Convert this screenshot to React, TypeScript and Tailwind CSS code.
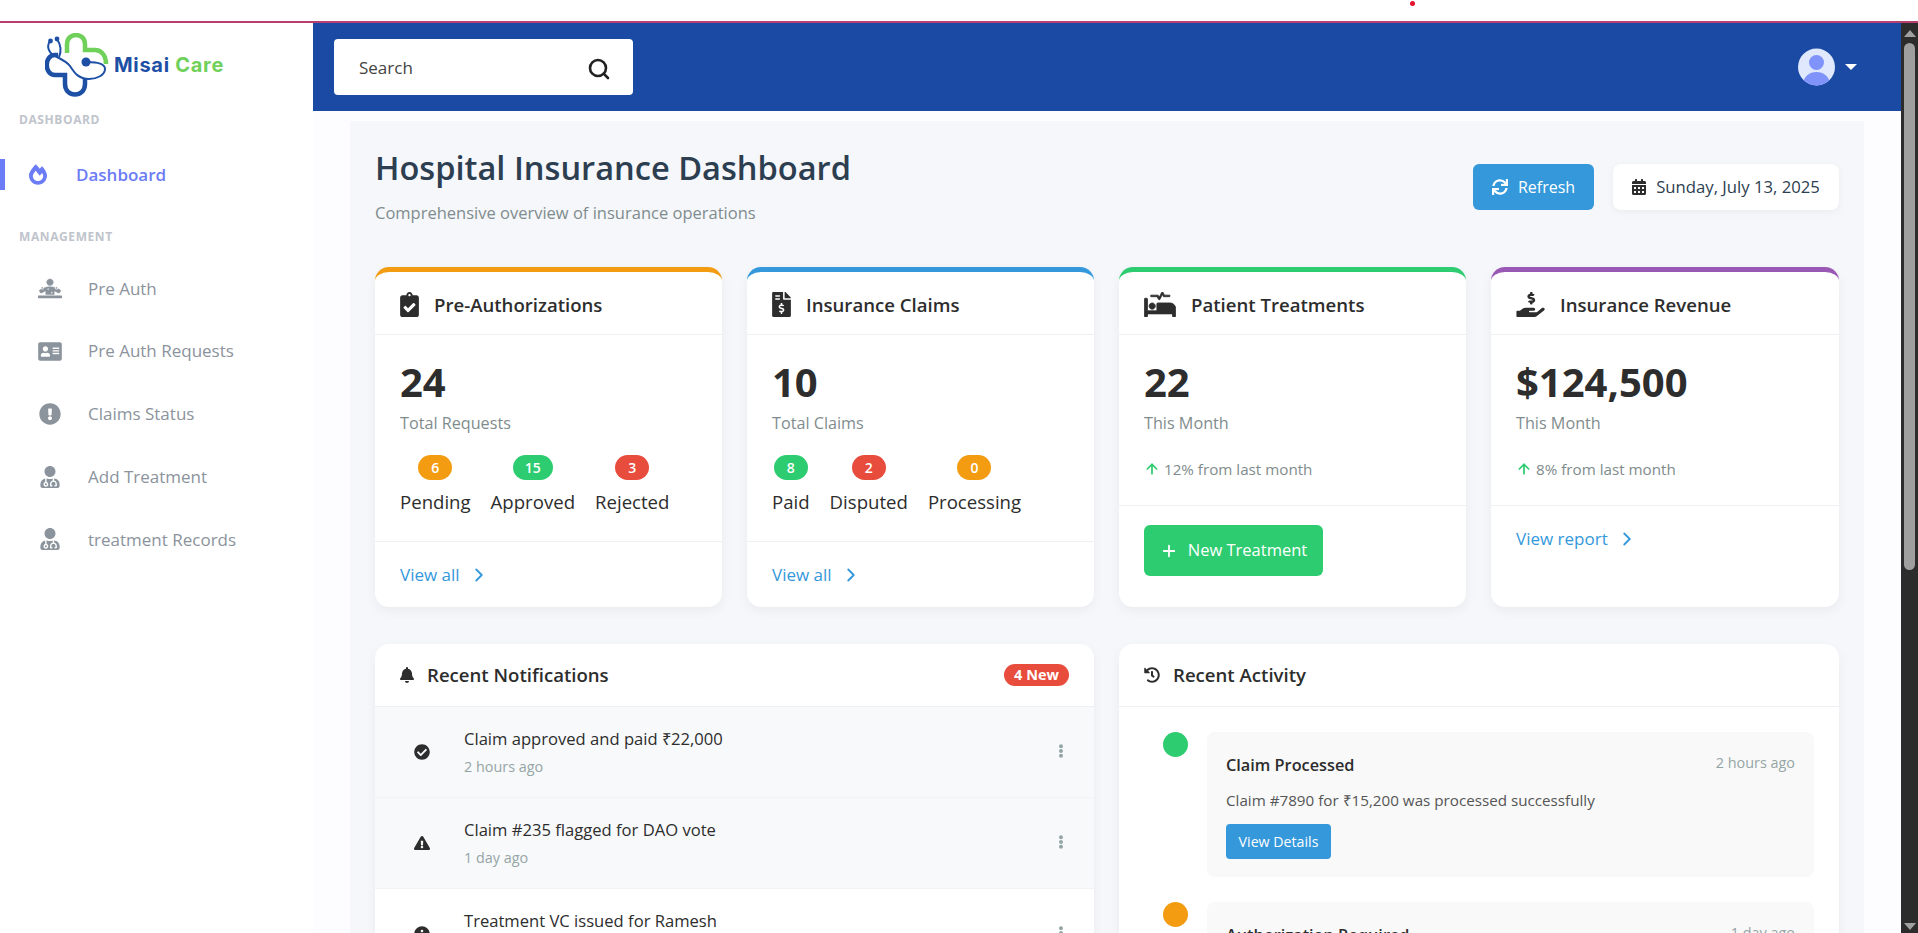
import React from 'react';
import {
  FaAddressCard,
  FaBell,
  FaCalendarAlt,
  FaCheckCircle,
  FaClipboardCheck,
  FaDiagnoses,
  FaEllipsisV,
  FaExclamationCircle,
  FaExclamationTriangle,
  FaFileInvoiceDollar,
  FaFireAlt,
  FaHandHoldingUsd,
  FaHistory,
  FaInfoCircle,
  FaProcedures,
  FaSync,
  FaUserMd,
} from 'react-icons/fa';
import { ArrowUp, ChevronRight, Plus, Search } from 'lucide-react';

const Logo = () => (
  <div className="flex items-center">
    <svg width="64" height="64" viewBox="0 0 64 64" fill="none">
      <path d="M22 20V11C22 -1 40 -1 40 11V17H50C56 17 61 22 61 31" stroke="#6fd05a" strokeWidth="4.5" />
      <path d="M13 22H10C-1 22 -1 42 10 42H20V51C20 65 40 65 40 51V46" stroke="#1d4fa5" strokeWidth="4.5" />
      <path d="M5 8C1 14 4 21 12 24C18 27 22 29 25 33C29 39 33 46 44 46C52 46 60 42 60 36C60 31 52 29 42 29" stroke="#1d4fa5" strokeWidth="2" />
      <path d="M12 6C16 12 17 17 14 24" stroke="#1d4fa5" strokeWidth="2" />
      <circle cx="5.5" cy="8" r="2.4" fill="#1d4fa5" />
      <circle cx="12" cy="6" r="2.4" fill="#1d4fa5" />
      <circle cx="41" cy="29" r="4.5" fill="#1d4fa5" />
    </svg>
    <span className="ml-[5px] font-['Inter',sans-serif] text-[20px] font-bold tracking-[0.7px] text-[#1d4fa5]">
      Misai <span className="text-[#6fd05a]">Care</span>
    </span>
  </div>
);

const navItems = [
  { label: 'Pre Auth', icon: <FaDiagnoses className="h-[21px] w-[24px] stroke-[12]" /> },
  { label: 'Pre Auth Requests', icon: <FaAddressCard className="h-[21px] w-[24px]" /> },
  { label: 'Claims Status', icon: <FaExclamationCircle className="h-[22px] w-[24px]" /> },
  { label: 'Add Treatment', icon: <FaUserMd className="h-[22px] w-[24px]" /> },
  { label: 'treatment Records', icon: <FaUserMd className="h-[22px] w-[24px]" /> },
];

const Sidebar = () => (
  <aside className="h-full w-[313px] shrink-0 bg-white">
    <div className="pl-[45px] pt-[10px]">
      <Logo />
    </div>
    <div className="pl-[19px] pt-[15px] text-[12px] font-bold leading-[16px] tracking-[0.6px] text-[#c0c4cc]">DASHBOARD</div>
    <div className="mt-[31px] flex h-[31px] items-center border-l-[5px] border-[#6b7cf6] pl-[24px] text-[#6b7cf6]">
      <FaFireAlt className="h-[21px] w-[18px]" />
      <span className="ml-[29px] text-[17px] font-semibold">Dashboard</span>
    </div>
    <div className="pl-[19px] pt-[39px] text-[12px] font-bold leading-[16px] tracking-[0.6px] text-[#c0c4cc]">MANAGEMENT</div>
    <nav className="mt-[12px] flex flex-col">
      {navItems.map((item) => (
        <div key={item.label} className="flex h-[62.75px] items-center pl-[38px] text-[#8b939c]">
          {item.icon}
          <span className="ml-[26px] text-[17px]">{item.label}</span>
        </div>
      ))}
    </nav>
  </aside>
);

const Header = () => (
  <header className="flex h-[88px] shrink-0 items-center justify-between bg-[#1a4aa3] pl-[21px] pr-[44px]">
    <div className="flex h-[56px] w-[299px] items-center justify-between rounded-[4px] bg-white pl-[25px] pr-[22px]">
      <span className="mt-[1px] text-[17px] text-[#444]">Search</span>
      <Search className="mt-[3px] h-[24px] w-[24px] text-[#222]" strokeWidth={2.6} />
    </div>
    <div className="flex items-center">
      <svg width="37" height="38" viewBox="0 0 37 38">
        <defs>
          <clipPath id="avatarClip">
            <circle cx="18.5" cy="19" r="18.5" />
          </clipPath>
        </defs>
        <circle cx="18.5" cy="19" r="18.5" fill="#dfe8fd" />
        <g clipPath="url(#avatarClip)" fill="#8093fb">
          <circle cx="18.5" cy="14.5" r="7.5" />
          <ellipse cx="18.5" cy="35" rx="13" ry="11" />
        </g>
      </svg>
      <div className="ml-[10px] h-0 w-0 border-x-[6px] border-t-[6px] border-x-transparent border-t-white" />
    </div>
  </header>
);

type Stat = { value: string; label: string; color: string; wide?: boolean };

const StatBadges = ({ stats }: { stats: Stat[] }) => (
  <div className="mt-[20px] flex gap-[20px]">
    {stats.map((s) => (
      <div key={s.label} className="flex flex-col items-center">
        <span className={`flex h-[25px] items-center justify-center rounded-full text-[14px] font-semibold text-white ${s.wide ? 'w-[40px]' : 'w-[34px]'} ${s.color}`}>
          {s.value}
        </span>
        <span className="mt-[9px] text-[18.6px] leading-[26px] text-[#2d2d2d]">{s.label}</span>
      </div>
    ))}
  </div>
);

const CardShell = ({ border, icon, title, children }: { border: string; icon: React.ReactNode; title: string; children: React.ReactNode }) => (
  <div className={`flex h-[340px] flex-col rounded-[14px] border-t-[5px] bg-white shadow-[0_4px_12px_rgba(0,0,0,0.05)] ${border}`}>
    <div className="flex h-[63px] items-center gap-[15px] border-b border-[#eef0f3] px-[25px] pt-[3px]">
      {icon}
      <span className="text-[18.6px] font-semibold text-[#2d2d2d]">{title}</span>
    </div>
    {children}
  </div>
);

const ViewLink = ({ label }: { label: string }) => (
  <a className="flex items-center text-[17px] font-medium text-[#3498db]">
    {label}
    <ChevronRight className="ml-[8px] h-[22px] w-[22px]" strokeWidth={2} />
  </a>
);

const Growth = ({ text }: { text: string }) => (
  <div className="mt-[23px] flex items-center text-[15.2px] text-[#7f8c8d]">
    <ArrowUp className="h-[20px] w-[16px] text-[#2ecc71]" strokeWidth={2.6} />
    <span className="ml-[4px]">{text}</span>
  </div>
);

const Metric = ({ value, label }: { value: string; label: string }) => (
  <>
    <div className="text-[40px] font-bold leading-[52px] text-[#2d2d2d]">{value}</div>
    <div className="mt-[3px] text-[16.2px] leading-[24px] text-[#7f8c8d]">{label}</div>
  </>
);

const notifications = [
  { title: 'Claim approved and paid ₹22,000', time: '2 hours ago', icon: <FaCheckCircle />, shaded: true },
  { title: 'Claim #235 flagged for DAO vote', time: '1 day ago', icon: <FaExclamationTriangle />, shaded: true },
  { title: 'Treatment VC issued for Ramesh', time: '2 days ago', icon: <FaInfoCircle />, shaded: false },
];

const Notifications = () => (
  <div className="rounded-[14px] bg-white shadow-[0_4px_12px_rgba(0,0,0,0.05)]">
    <div className="flex h-[63px] items-center justify-between border-b border-[#eef0f3] px-[25px]">
      <div className="flex items-center">
        <FaBell className="h-[16px] w-[14px] text-[#2d2d2d]" />
        <span className="ml-[13px] text-[18.6px] font-semibold text-[#2d2d2d]">Recent Notifications</span>
      </div>
      <span className="flex h-[22px] w-[65px] items-center justify-center rounded-full bg-[#e74c3c] text-[14.5px] font-bold text-white">4 New</span>
    </div>
    {notifications.map((n) => (
      <div key={n.title} className={`flex h-[91px] items-center border-b border-[#f1f3f5] pl-[39px] pr-[26px] ${n.shaded ? 'bg-[#f8f9fb]' : 'bg-white'}`}>
        <span className="text-[16px] text-[#2d2d2d]">{n.icon}</span>
        <div className="ml-[34px] flex-1">
          <div className="text-[16.6px] leading-[24px] text-[#2d2d2d]">{n.title}</div>
          <div className="mt-[6px] text-[14.4px] leading-[20px] text-[#95a5a6]">{n.time}</div>
        </div>
        <FaEllipsisV className="-mt-[2px] h-[14px] w-[14px] text-[#95a5a6]" />
      </div>
    ))}
  </div>
);

const activities = [
  { title: 'Claim Processed', time: '2 hours ago', desc: 'Claim #7890 for ₹15,200 was processed successfully', dot: 'bg-[#2ecc71]', button: 'View Details' },
  { title: 'Authorization Required', time: '1 day ago', desc: 'Pre-authorization #4521 requires your review', dot: 'bg-[#f39c12]', button: 'Review' },
];

const Activity = () => (
  <div className="rounded-[14px] bg-white shadow-[0_4px_12px_rgba(0,0,0,0.05)]">
    <div className="flex h-[63px] items-center border-b border-[#eef0f3] px-[25px]">
      <FaHistory className="h-[16px] w-[16px] text-[#2d2d2d]" />
      <span className="ml-[13px] text-[18.6px] font-semibold text-[#2d2d2d]">Recent Activity</span>
    </div>
    <div className="flex flex-col gap-[25px] pb-[25px] pl-[44px] pr-[25px] pt-[25px]">
      {activities.map((a) => (
        <div key={a.title} className="flex gap-[19px]">
          <span className={`h-[25px] w-[25px] shrink-0 rounded-full ${a.dot}`} />
          <div className="h-[145px] flex-1 rounded-[8px] bg-[#f9f9f9] px-[19px] pt-[19px]">
            <div className="flex items-start justify-between">
              <span className="text-[16.3px] font-semibold leading-[28px] text-[#2d2d2d]">{a.title}</span>
              <span className="text-[14.4px] leading-[24px] text-[#95a5a6]">{a.time}</span>
            </div>
            <div className="mt-[11px] text-[15.2px] leading-[20px] text-[#555]">{a.desc}</div>
            <button className="mt-[14px] flex h-[35px] w-[105px] items-center justify-center rounded-[4px] bg-[#3498db] text-[14.2px] text-white">{a.button}</button>
          </div>
        </div>
      ))}
    </div>
  </div>
);

const Dashboard = () => (
  <div className="mx-[37px] mt-[10px] bg-[#f5f7fb] px-[25px] pt-[25px]">
    <div className="flex items-start justify-between">
      <div>
        <h1 className="text-[32.6px] font-semibold leading-[44px] text-[#2c3e50]">Hospital Insurance Dashboard</h1>
        <p className="mt-[11px] text-[16.5px] leading-[24px] text-[#7f8c8d]">Comprehensive overview of insurance operations</p>
      </div>
      <div className="mt-[18px] flex items-center gap-[19px]">
        <button className="flex h-[46px] w-[121px] items-center justify-center gap-[10px] rounded-[6px] bg-[#3498db] text-[16px] text-white">
          <FaSync className="h-[16px] w-[16px]" />
          Refresh
        </button>
        <div className="flex h-[46px] w-[226px] items-center justify-center gap-[10px] rounded-[8px] bg-white text-[16.7px] text-[#2c3e50] shadow-[0_2px_8px_rgba(0,0,0,0.05)]">
          <FaCalendarAlt className="h-[16px] w-[14px] text-[#2d2d2d]" />
          Sunday, July 13, 2025
        </div>
      </div>
    </div>

    <div className="mt-[42px] grid grid-cols-[347px_347px_347px_348px] gap-[25px]">
      <CardShell border="border-[#f39c12]" icon={<FaClipboardCheck className="h-[25px] w-[19px] text-[#2d2d2d]" />} title="Pre-Authorizations">
        <div className="h-[207px] border-b border-[#eef0f3] px-[25px] pt-[21px]">
          <Metric value="24" label="Total Requests" />
          <StatBadges
            stats={[
              { value: '6', label: 'Pending', color: 'bg-[#f39c12]' },
              { value: '15', label: 'Approved', color: 'bg-[#2ecc71]', wide: true },
              { value: '3', label: 'Rejected', color: 'bg-[#e74c3c]' },
            ]}
          />
        </div>
        <div className="flex flex-1 items-center px-[25px]">
          <ViewLink label="View all" />
        </div>
      </CardShell>

      <CardShell border="border-[#3498db]" icon={<FaFileInvoiceDollar className="h-[25px] w-[19px] text-[#2d2d2d]" />} title="Insurance Claims">
        <div className="h-[207px] border-b border-[#eef0f3] px-[25px] pt-[21px]">
          <Metric value="10" label="Total Claims" />
          <StatBadges
            stats={[
              { value: '8', label: 'Paid', color: 'bg-[#2ecc71]' },
              { value: '2', label: 'Disputed', color: 'bg-[#e74c3c]' },
              { value: '0', label: 'Processing', color: 'bg-[#f39c12]' },
            ]}
          />
        </div>
        <div className="flex flex-1 items-center px-[25px]">
          <ViewLink label="View all" />
        </div>
      </CardShell>

      <CardShell border="border-[#2ecc71]" icon={<FaProcedures className="h-[25px] w-[32px] stroke-[16] text-[#2d2d2d]" />} title="Patient Treatments">
        <div className="h-[171px] border-b border-[#eef0f3] px-[25px] pt-[21px]">
          <Metric value="22" label="This Month" />
          <Growth text="12% from last month" />
        </div>
        <div className="px-[25px] pt-[19px]">
          <button className="flex h-[51px] w-[179px] items-center justify-center gap-[10px] rounded-[6px] bg-[#2ecc71] text-[16.5px] text-white">
            <Plus className="h-[18px] w-[18px]" strokeWidth={2.4} />
            New Treatment
          </button>
        </div>
      </CardShell>

      <CardShell border="border-[#9b59b6]" icon={<FaHandHoldingUsd className="h-[25px] w-[29px] text-[#2d2d2d]" />} title="Insurance Revenue">
        <div className="h-[171px] border-b border-[#eef0f3] px-[25px] pt-[21px]">
          <Metric value="$124,500" label="This Month" />
          <Growth text="8% from last month" />
        </div>
        <div className="px-[25px] pt-[20px]">
          <ViewLink label="View report" />
        </div>
      </CardShell>
    </div>

    <div className="mt-[37px] grid grid-cols-[719px_720px] gap-[25px]">
      <Notifications />
      <Activity />
    </div>
  </div>
);

const Scrollbar = () => (
  <div className="flex h-full w-[17px] shrink-0 flex-col items-center bg-[#2c2c2c]">
    <div className="mt-[7px] h-0 w-0 border-x-[6px] border-b-[7px] border-x-transparent border-b-[#a0a0a0]" />
    <div className="mt-[6px] h-[527px] w-[11px] rounded-full bg-[#9f9f9f]" />
    <div className="mt-auto mb-[3px] h-0 w-0 border-x-[6px] border-t-[7px] border-x-transparent border-t-[#a0a0a0]" />
  </div>
);

const App = () => (
  <div className="flex h-[933px] w-full flex-col overflow-hidden bg-white font-['Open_Sans',sans-serif]">
    <div className="relative h-[21px] shrink-0 bg-white">
      <span className="absolute left-[1410px] top-[1px] h-[5px] w-[5px] rounded-full bg-[#e8112d]" />
    </div>
    <div className="h-[2px] shrink-0 bg-[#b83f72]" />
    <div className="flex min-h-0 flex-1">
      <Sidebar />
      <main className="flex min-w-0 flex-1 flex-col overflow-hidden bg-[#fdfdff]">
        <Header />
        <Dashboard />
      </main>
      <Scrollbar />
    </div>
  </div>
);

export default App;
